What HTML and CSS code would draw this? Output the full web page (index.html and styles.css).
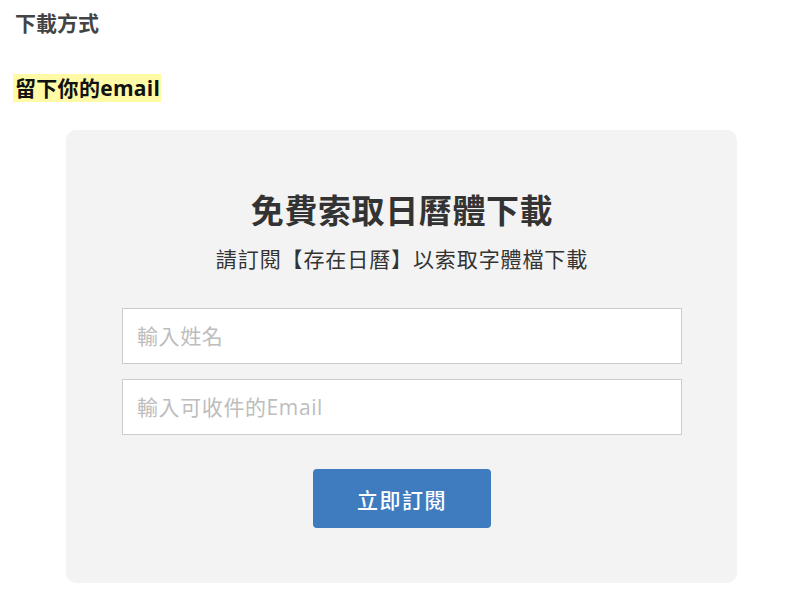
FILE: index.html
```html
<!DOCTYPE html>
<html lang="zh-Hant">
<head>
<meta charset="utf-8">
<link rel="stylesheet" href="styles.css">
</head>
<body>
<div class="page">
  <div class="heading">下載方式</div>
  <div class="sub-heading"><span class="mark">留下你的email</span></div>
  <div class="card">
    <h1 class="card-title">免費索取日曆體下載</h1>
    <p class="card-desc">請訂閱【存在日曆】以索取字體檔下載</p>
    <form class="form">
      <input class="field" type="text" placeholder="輸入姓名">
      <input class="field" type="email" placeholder="輸入可收件的Email">
      <button class="btn" type="button">立即訂閱</button>
    </form>
  </div>
</div>
</body>
</html>
```

FILE: styles.css
```css
html, body {
  margin: 0;
  padding: 0;
  background: #ffffff;
}
body {
  font-family: "Noto Sans CJK TC", "Noto Sans", sans-serif;
}
.page {
  padding: 8px 0 0 15px;
}
.heading {
  font-size: 21px;
  line-height: 28px;
  font-weight: 700;
  color: #444444;
}
.sub-heading {
  margin-top: 40px;
  font-family: "Open Sans", "Noto Sans CJK TC", sans-serif;
  font-size: 21px;
  line-height: 24px;
  font-weight: 700;
  color: #111111;
  letter-spacing: 0.3px;
}
.mark {
  background: #fffaa6;
  margin-left: -2px;
  padding: 0 1px 0 2px;
}
.card {
  margin: 30px 0 0 51px;
  width: 671px;
  box-sizing: border-box;
  height: 453px;
  background: #f3f3f3;
  border-radius: 10px;
  padding: 58px 55px 0 56px;
  display: flex;
  flex-direction: column;
  align-items: center;
}
.card-title {
  margin: 0;
  font-size: 33px;
  line-height: 42px;
  font-weight: 700;
  color: #333333;
  letter-spacing: 0.6px;
}
.card-desc {
  margin: 13px 0 0;
  font-size: 21px;
  line-height: 30px;
  color: #333333;
  letter-spacing: 0.9px;
}
.form {
  margin-top: 35px;
  width: 560px;
  display: flex;
  flex-direction: column;
  align-items: center;
  gap: 15px;
}
.field {
  width: 100%;
  height: 56px;
  box-sizing: border-box;
  border: 1px solid #cccccc;
  background: #ffffff;
  padding: 0 14px;
  font-family: "Open Sans", "Noto Sans CJK TC", sans-serif;
  font-size: 21px;
  letter-spacing: 0.6px;
  color: #333;
  outline: none;
}
.field::placeholder {
  color: #bdbdbd;
}
.btn {
  margin-top: 19px;
  width: 178px;
  height: 59px;
  border: none;
  border-radius: 4px;
  background: #3e7cbf;
  color: #ffffff;
  font-family: "Noto Sans CJK TC", "Noto Sans", sans-serif;
  font-size: 21px;
  font-weight: 500;
  letter-spacing: 1.5px;
}
```
